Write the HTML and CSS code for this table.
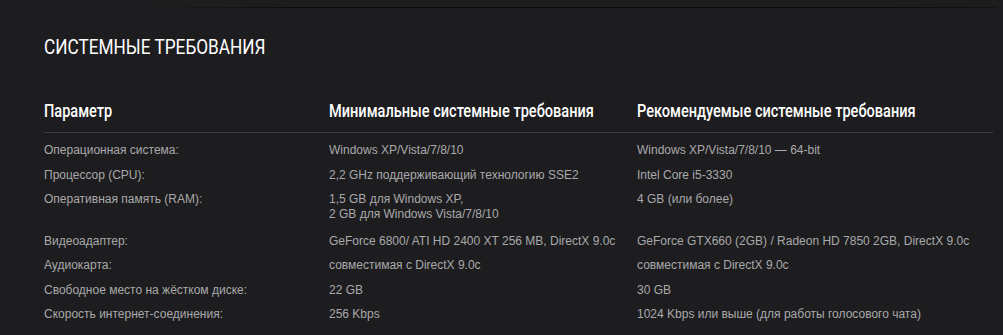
FILE: index.html
```html
<!DOCTYPE html>
<html lang="ru">
<head>
<meta charset="utf-8">
<link rel="stylesheet" href="styles.css">
</head>
<body>
<div class="page">
  <div class="topline"></div>
  <section class="req">
    <h2 class="req-title"><span class="cond">СИСТЕМНЫЕ ТРЕБОВАНИЯ</span></h2>
    <table class="req-table">
      <thead>
        <tr>
          <th class="c1"><span class="cond cond-th">Параметр</span></th>
          <th class="c2"><span class="cond cond-th">Минимальные системные требования</span></th>
          <th class="c3"><span class="cond cond-th">Рекомендуемые системные требования</span></th>
        </tr>
      </thead>
      <tbody>
        <tr><td>Операционная система:</td><td>Windows XP/Vista/7/8/10</td><td>Windows XP/Vista/7/8/10 — 64-bit</td></tr>
        <tr><td>Процессор (CPU):</td><td>2,2 GHz поддерживающий технологию SSE2</td><td>Intel Core i5-3330</td></tr>
        <tr class="tall"><td>Оперативная память (RAM):</td><td>1,5 GB для Windows XP,<br>2 GB для Windows Vista/7/8/10</td><td>4 GB (или более)</td></tr>
        <tr><td>Видеоадаптер:</td><td>GeForce 6800/ ATI HD 2400 XT 256 MB, DirectX 9.0c</td><td>GeForce GTX660 (2GB) / Radeon HD 7850 2GB, DirectX 9.0c</td></tr>
        <tr><td>Аудиокарта:</td><td>совместимая с DirectX 9.0c</td><td>совместимая с DirectX 9.0c</td></tr>
        <tr><td>Свободное место на жёстком диске:</td><td>22 GB</td><td>30 GB</td></tr>
        <tr><td>Скорость интернет-соединения:</td><td>256 Kbps</td><td>1024 Kbps или выше (для работы голосового чата)</td></tr>
      </tbody>
    </table>
  </section>
</div>
</body>
</html>
```
FILE: styles.css
```css
html, body {
  margin: 0;
  padding: 0;
  background: #1d1d1f;
}
.page {
  width: 1003px;
  height: 335px;
  overflow: hidden;
  padding-top: 7px;
  box-sizing: border-box;
}
.topline {
  margin-left: 150px;
  width: 846px;
  height: 1px;
  background: linear-gradient(to right, rgba(0,0,0,0), #0b0b0b 18%, #0b0b0b 85%, rgba(0,0,0,0.35));
}
.req {
  padding: 0 10px 0 44px;
}
.cond {
  display: inline-block;
  white-space: nowrap;
  transform: scaleX(0.82);
  transform-origin: 0 50%;
}
.cond-th {
  transform: scaleX(0.808);
}
.req-title {
  margin: 27px 0 0;
  font-family: "Roboto", "Liberation Sans", sans-serif;
  font-weight: normal;
  font-size: 21px;
  line-height: 24px;
  color: #ffffff;
}
.req-table {
  margin-top: 41px;
  width: 949px;
  border-collapse: collapse;
  table-layout: fixed;
}
.req-table th {
  text-align: left;
  font-family: "Roboto", "Liberation Sans", sans-serif;
  font-weight: 500;
  font-size: 18px;
  line-height: 22px;
  color: #ffffff;
  padding: 0 0 10px;
  border-bottom: 1px solid #3b3b3d;
  white-space: nowrap;
}
.req-table th.c1 { width: 285px; }
.req-table th.c2 { width: 308px; }
.req-table td {
  font-family: "Liberation Sans", Arial, sans-serif;
  font-size: 12px;
  line-height: 15px;
  color: #a9a9ab;
  padding: 5px 0 4.5px;
  vertical-align: top;
  white-space: nowrap;
}
.req-table tbody tr:first-child td { padding-top: 10px; }
.req-table tr.tall td { padding-bottom: 6.5px; }
```
